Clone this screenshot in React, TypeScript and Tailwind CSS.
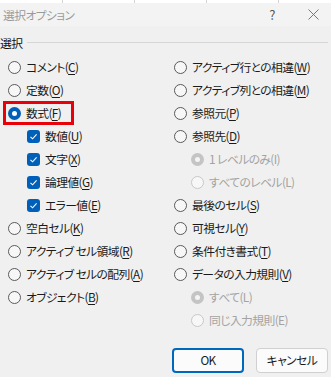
import React from "react";

type Opt = {
  label: string;
  key: string;
  kind: "radio" | "check";
  checked?: boolean;
  disabled?: boolean;
  indent?: boolean;
  mark?: boolean;
};

const left: Opt[] = [
  { label: "コメント", key: "C", kind: "radio" },
  { label: "定数", key: "O", kind: "radio" },
  { label: "数式", key: "F", kind: "radio", checked: true, mark: true },
  { label: "数値", key: "U", kind: "check", checked: true, indent: true },
  { label: "文字", key: "X", kind: "check", checked: true, indent: true },
  { label: "論理値", key: "G", kind: "check", checked: true, indent: true },
  { label: "エラー値", key: "E", kind: "check", checked: true, indent: true },
  { label: "空白セル", key: "K", kind: "radio" },
  { label: "アクティブ セル領域", key: "R", kind: "radio" },
  { label: "アクティブ セルの配列", key: "A", kind: "radio" },
  { label: "オブジェクト", key: "B", kind: "radio" },
];

const right: Opt[] = [
  { label: "アクティブ行との相違", key: "W", kind: "radio" },
  { label: "アクティブ列との相違", key: "M", kind: "radio" },
  { label: "参照元", key: "P", kind: "radio" },
  { label: "参照先", key: "D", kind: "radio" },
  { label: "1 レベルのみ", key: "I", kind: "radio", checked: true, disabled: true, indent: true },
  { label: "すべてのレベル", key: "L", kind: "radio", disabled: true, indent: true },
  { label: "最後のセル", key: "S", kind: "radio" },
  { label: "可視セル", key: "Y", kind: "radio" },
  { label: "条件付き書式", key: "T", kind: "radio" },
  { label: "データの入力規則", key: "V", kind: "radio" },
  { label: "すべて", key: "L", kind: "radio", checked: true, disabled: true, indent: true },
  { label: "同じ入力規則", key: "E", kind: "radio", disabled: true, indent: true },
];

const Radio = ({ checked, disabled }: { checked?: boolean; disabled?: boolean }) => {
  if (checked && disabled)
    return (
      <span className="w-[13px] h-[13px] rounded-full bg-[#c4c4c4] flex items-center justify-center shrink-0">
        <span className="w-[5px] h-[5px] rounded-full bg-[#f4f4f4]" />
      </span>
    );
  if (checked)
    return (
      <span className="w-[13px] h-[13px] rounded-full bg-[#005fb8] flex items-center justify-center shrink-0">
        <span className="w-[5px] h-[5px] rounded-full bg-white" />
      </span>
    );
  return (
    <span
      className={`w-[13px] h-[13px] rounded-full border bg-[#f7f7f7] shrink-0 ${disabled ? "border-[#c8c8c8]" : "border-[#5a5a5a]"}`}
    />
  );
};

const Check = () => (
  <span className="w-[13px] h-[13px] rounded-[3px] bg-[#005fb8] flex items-center justify-center shrink-0">
    <svg width="9" height="9" viewBox="0 0 9 9" fill="none">
      <path d="M1.5 4.8 L3.6 6.8 L7.6 2.4" stroke="white" strokeWidth="1.1" />
    </svg>
  </span>
);

const Row = ({ o, indentPx }: { o: Opt; indentPx: string }) => (
  <div
    className={`relative h-[23px] flex items-center gap-[5px] ${o.indent ? indentPx : ""} ${o.disabled ? "text-[#a3a3a3]" : "text-[#1a1a1a]"}`}
  >
    {o.kind === "radio" ? <Radio checked={o.checked} disabled={o.disabled} /> : <Check />}
    <span className="whitespace-nowrap">
      {o.label}(<span className={o.disabled ? "" : "underline underline-offset-2"}>{o.key}</span>)
    </span>
    {o.mark && (
      <span className="absolute left-[-5px] top-[-1px] w-[71px] h-[24px] border-[3px] border-[#e8000b]" />
    )}
  </div>
);

export default function App() {
  return (
    <div
      className="w-[331px] h-[377px] bg-[#f0f0f0] text-[11.8px] tracking-[-0.6px] [font-feature-settings:'palt'] overflow-hidden"
      style={{ fontFamily: '"Noto Sans CJK JP", "Noto Sans", sans-serif' }}
    >
      {/* sheet behind */}
      <div className="h-[3px] bg-white flex">
        <span className="w-[63px] border-r border-[#d4d4d4]" />
        <span className="w-[72px] border-r border-[#d4d4d4]" />
        <span className="w-[72px] border-r border-[#d4d4d4]" />
        <span className="w-[72px] border-r border-[#d4d4d4]" />
      </div>

      {/* title bar */}
      <div className="h-[23px] bg-[#f3f3f3] flex items-center pl-[3px] pr-[10px] text-[#9a9a9a]">
        <span className="flex-1">選択オプション</span>
        <span className="w-[20px] text-center text-[#555] text-[13px] mr-[26px]">?</span>
        <svg width="11" height="11" viewBox="0 0 11 11" className="mr-[2px]">
          <path d="M0.5 0.5 L10.5 10.5 M10.5 0.5 L0.5 10.5" stroke="#777" strokeWidth="1" />
        </svg>
      </div>

      {/* section */}
      <div className="flex items-center gap-[5px] pt-[8px] pr-[3px] text-[#111]">
        <span>選択</span>
        <span className="flex-1 h-px bg-[#d6d6d6]" />
      </div>

      <div className="flex pt-[4px]">
        <div className="w-[166px] pl-[8px] flex flex-col">
          {left.map((o, i) => (
            <Row key={i} o={o} indentPx="pl-[19px]" />
          ))}
        </div>
        <div className="flex-1 pl-[8px] flex flex-col">
          {right.map((o, i) => (
            <Row key={i} o={o} indentPx="pl-[17px]" />
          ))}
        </div>
      </div>

      {/* buttons */}
      <div className="flex justify-end gap-[12px] pr-[3px] pt-[16px]">
        <button className="w-[72px] h-[25px] rounded-[4px] border-2 border-[#0067c0] bg-[#fbfbfb] text-[#1a1a1a]">
          OK
        </button>
        <button className="w-[72px] h-[25px] rounded-[4px] border border-[#d0d0d0] bg-[#fbfbfb] text-[#1a1a1a]">
          キャンセル
        </button>
      </div>
    </div>
  );
}
